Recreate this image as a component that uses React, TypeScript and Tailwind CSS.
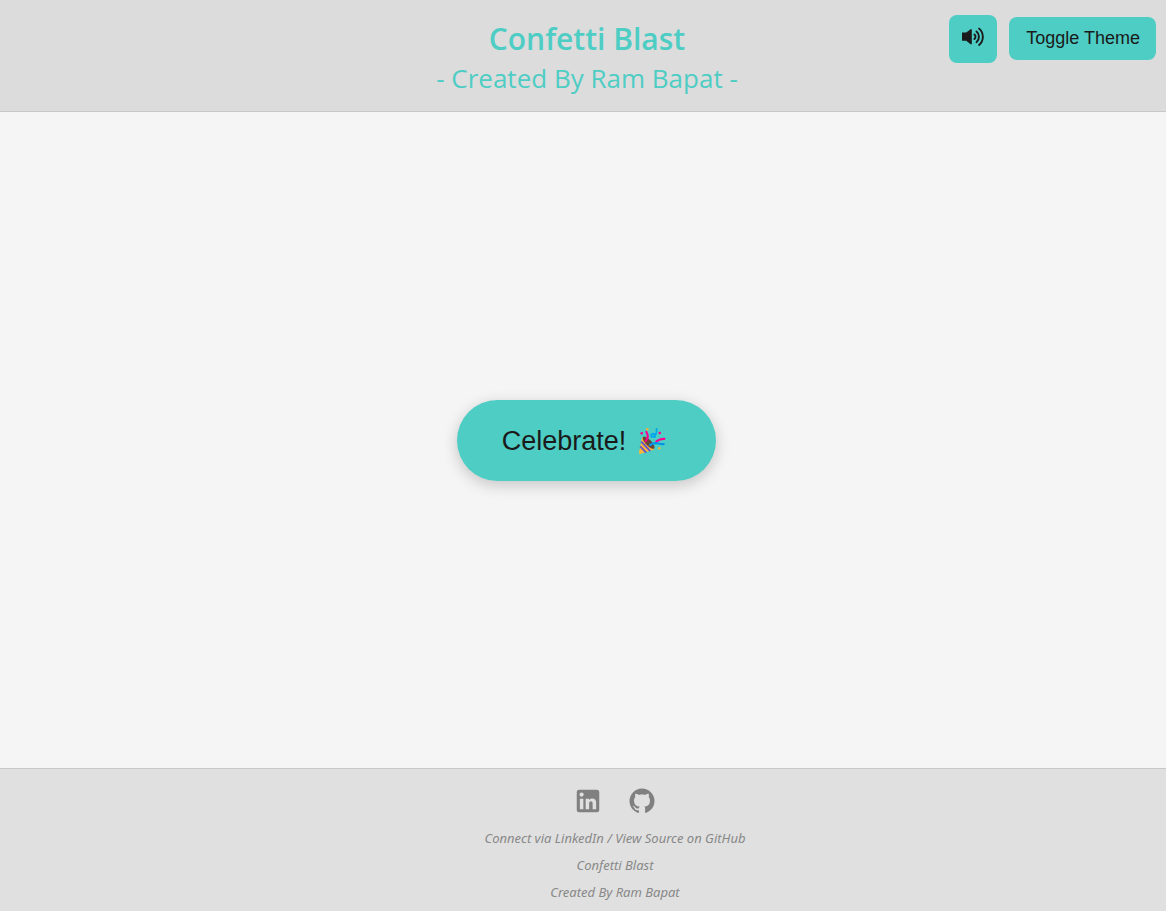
function SpeakerIcon() {
  return (
    <svg viewBox="0 0 24 24" className="size-6" fill="none" stroke="currentColor" strokeWidth="1.9" strokeLinecap="round" aria-hidden="true">
      <path d="M1 7.600h4.200L9.600 4.200h1.200v15H9.600l-4.400-3.500H1Z" fill="currentColor" stroke="none" />
      <path d="M13.400 9.500c1.500 1.200 1.500 3.400 0 4.600" />
      <path d="M15.500 6.400c3.300 2.600 3.300 8.200 0 10.800" />
      <path d="M18.100 3.600c5 4.300 5 12.100 0 16.400" />
    </svg>
  );
}

function LinkedInIcon() {
  return (
    <svg viewBox="0 0 24 24" className="size-[30px]" fill="currentColor" aria-hidden="true">
      <path d="M19 3a2 2 0 0 1 2 2v14a2 2 0 0 1-2 2H5a2 2 0 0 1-2-2V5a2 2 0 0 1 2-2h14m-.5 15.500v-5.300a3.260 3.260 0 0 0-3.260-3.260c-.85 0-1.840.52-2.320 1.300v-1.110h-2.790v8.370h2.790v-4.930c0-.77.62-1.400 1.390-1.400a1.400 1.400 0 0 1 1.400 1.400v4.930h2.790M6.880 8.560a1.680 1.680 0 0 0 1.680-1.680c0-.93-.75-1.690-1.680-1.690a1.690 1.690 0 0 0-1.690 1.690c0 .93.76 1.680 1.690 1.680m1.390 9.940v-8.370H5.500v8.370h2.770Z" />
    </svg>
  );
}

function GitHubIcon() {
  return (
    <svg viewBox="0 0 24 24" className="size-[30px]" fill="currentColor" aria-hidden="true">
      <path d="M12 2A10 10 0 0 0 2 12c0 4.420 2.870 8.170 6.840 9.500.5.08.66-.23.66-.5v-1.690c-2.770.6-3.360-1.340-3.360-1.340-.46-1.160-1.110-1.470-1.110-1.470-.91-.62.07-.6.07-.6 1 .07 1.530 1.030 1.530 1.030.87 1.520 2.340 1.070 2.910.83.09-.65.35-1.090.63-1.340-2.220-.25-4.550-1.110-4.550-4.920 0-1.110.38-2 1.030-2.710-.1-.25-.45-1.290.1-2.640 0 0 .84-.27 2.750 1.020.79-.22 1.650-.33 2.500-.33s1.710.11 2.500.33c1.910-1.290 2.750-1.020 2.750-1.020.55 1.350.2 2.390.1 2.640.65.71 1.030 1.600 1.030 2.710 0 3.820-2.340 4.660-4.570 4.910.36.31.69.92.69 1.850V21c0 .27.16.59.67.5C19.140 20.160 22 16.420 22 12A10 10 0 0 0 12 2" />
    </svg>
  );
}

function PartyPopper() {
  return (
    <svg viewBox="0 0 28 28" className="size-7" fill="none" strokeLinecap="round" aria-hidden="true">
      <path d="M4.200 10 1 25.400c-.2 1.200.7 1.700 1.700 1.400L16.200 22.400Z" fill="#ffb636" />
      <path d="M3.200 14.700 12.200 24.200M2.200 19.300 8.200 25.600" stroke="#6155cf" strokeWidth="1.900" strokeLinecap="butt" />
      <ellipse cx="10.600" cy="15.700" rx="3" ry="8" transform="rotate(-44 10.600 15.700)" fill="#6d4534" />
      <path d="M8.400 5c2 3.300 1.900 6.300-.7 9" stroke="#fb0090" strokeWidth="2.200" />
      <path d="M18.400 14.300c2.600-2 4.600-2.700 8-2.500" stroke="#fb0090" strokeWidth="2.200" />
      <path d="M12 18c5.700-4.300 8-.5 13.700-.9" stroke="#0094e8" strokeWidth="2.200" />
      <path d="M18.600 1.800c.5 3.800-1.400 8-4 8.200-2.100-.1-2.100-2.800-.3-3.200 1.900-.3 2.700 1.200 2.600 3.400" stroke="#00a6ed" strokeWidth="1.800" />
      <circle cx="3.700" cy="6.300" r="1.300" fill="#fb0090" />
      <circle cx="21.700" cy="6" r="1.300" fill="#fb0090" />
      <circle cx="9.300" cy="2.200" r="1.200" fill="#ffb02e" />
      <circle cx="21.300" cy="21.300" r="1.200" fill="#ffb02e" />
    </svg>
  );
}

export default function App() {
  return (
    <div className="flex min-h-screen flex-col bg-[#f5f5f5] font-['Segoe_UI','Open_Sans',sans-serif]">
      <header className="relative border-b border-[#c8c8c8] bg-[#dcdcdc] pt-[17px] pb-3 pl-2 text-center text-[#4ecdc4]">
        <h1 className="text-[30px] leading-[44px] font-semibold">Confetti Blast</h1>
        <h2 className="pb-[3px] text-[26px] leading-[35px]">- Created By Ram Bapat -</h2>
        <div className="absolute top-[15px] right-[10px] flex items-start gap-3 text-[#1a1a1a]">
          <button
            type="button"
            aria-label="Toggle sound"
            className="flex size-12 items-center justify-center rounded-lg bg-[#4ecdc4] pb-1"
          >
            <SpeakerIcon />
          </button>
          <button
            type="button"
            className="mt-0.5 h-[43px] rounded-lg bg-[#4ecdc4] pr-4 pl-[17px] font-['Liberation_Sans',Arial,sans-serif] text-[18px]"
          >
            Toggle Theme
          </button>
        </div>
      </header>

      <main className="flex flex-1 items-center justify-center pl-[7px]">
        <button
          type="button"
          className="flex h-[81px] items-center gap-3 rounded-full bg-[#4ecdc4] pt-0.5 pr-[50px] pl-[45px] font-['Liberation_Sans',Arial,sans-serif] text-[27px] text-[#1a1a1a] shadow-[0_4px_15px_rgba(0,0,0,0.2)]"
        >
          <span>Celebrate!</span>
          <PartyPopper />
        </button>
      </main>

      <footer className="flex flex-col items-center border-t border-[#c8c8c8] bg-[#e0e0e0] pt-[17px] pb-[9px] pl-16 text-[#808080]">
        <div className="flex gap-6">
          <a href="#linkedin" aria-label="LinkedIn">
            <LinkedInIcon />
          </a>
          <a href="#github" aria-label="GitHub">
            <GitHubIcon />
          </a>
        </div>
        <div className="mt-[13px] flex flex-col gap-2 text-center font-['Segoe_UI','Noto_Sans',sans-serif] text-[13px] leading-[19px] text-[#888888] italic">
          <p>Connect via LinkedIn / View Source on GitHub</p>
          <p>Confetti Blast</p>
          <p>Created By Ram Bapat</p>
        </div>
      </footer>
    </div>
  );
}
